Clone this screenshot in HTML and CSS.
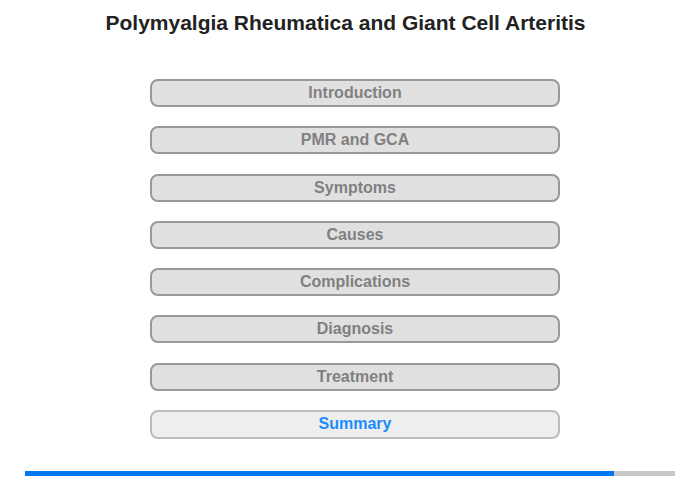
FILE: index.html
```html
<!DOCTYPE html>
<html>
<head>
<meta charset="utf-8">
<link rel="stylesheet" href="styles.css">
</head>
<body>
<div class="page">
  <h1 class="title">Polymyalgia Rheumatica and Giant Cell Arteritis</h1>
  <nav class="menu">
    <div class="item">Introduction</div>
    <div class="item">PMR and GCA</div>
    <div class="item">Symptoms</div>
    <div class="item">Causes</div>
    <div class="item">Complications</div>
    <div class="item">Diagnosis</div>
    <div class="item">Treatment</div>
    <div class="item active">Summary</div>
  </nav>
  <div class="progress"><div class="fill" style="width: 90.6%"></div></div>
</div>
</body>
</html>
```
FILE: styles.css
```css
html, body {
  margin: 0;
  padding: 0;
  background: #fff;
}
.page {
  width: 700px;
  height: 480px;
  font-family: "Liberation Sans", Arial, sans-serif;
  display: flex;
  flex-direction: column;
  align-items: center;
}
.title {
  margin: 11px 9px 0 0;
  font-size: 21px;
  font-weight: bold;
  color: #222;
  line-height: 24px;
  text-align: center;
}
.menu {
  margin-top: 44px;
  margin-left: 10px;
  display: flex;
  flex-direction: column;
  gap: 19.3px;
  width: 410px;
}
.item {
  box-sizing: border-box;
  height: 28px;
  border: 2px solid #999;
  border-radius: 8px;
  background: #e0e0e0;
  color: #808080;
  font-size: 16px;
  font-weight: bold;
  line-height: 24px;
  text-align: center;
}
.item.active {
  background: #eeeeee;
  border-color: #bbb;
  color: #1a8cff;
  height: 29px;
}
.progress {
  margin-top: 32px;
  width: 650px;
  height: 5px;
  background: #c8c8c8;
}
.fill {
  height: 100%;
  background: #0077ee;
}
```
